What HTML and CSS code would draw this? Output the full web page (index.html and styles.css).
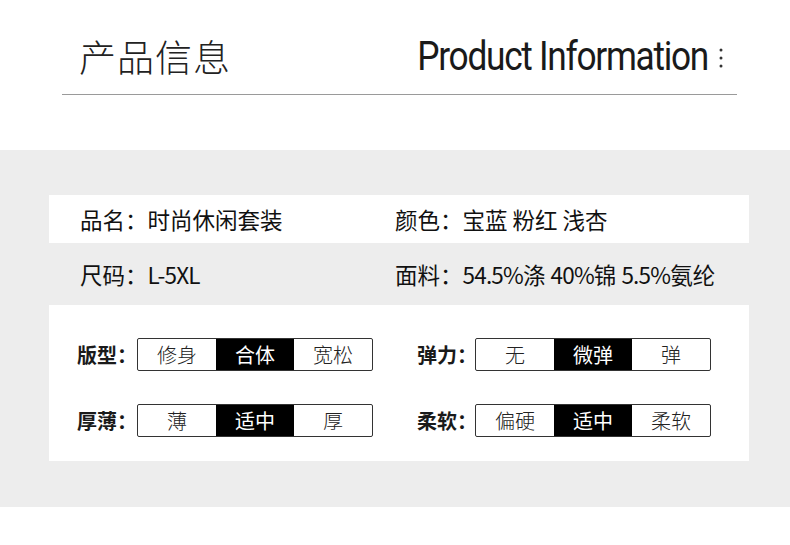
FILE: index.html
```html
<!DOCTYPE html>
<html lang="zh-CN">
<head>
<meta charset="utf-8">
<link rel="stylesheet" href="styles.css">
</head>
<body>
<div class="page">
  <header class="head">
    <div class="head-row">
      <h1 class="title-cn">产品信息</h1>
      <div class="title-en"><span class="en-text">Product Information</span>
        <svg class="dots" width="6" height="22" viewBox="0 0 6 22"><circle cx="3" cy="3" r="1.5"/><circle cx="3" cy="11" r="1.5"/><circle cx="3" cy="19" r="1.5"/></svg>
      </div>
    </div>
    <div class="rule"></div>
  </header>

  <section class="band">
    <div class="info-row white">
      <div class="cell">品名：时尚休闲套装</div>
      <div class="cell">颜色：宝蓝 粉红 浅杏</div>
    </div>
    <div class="info-row grey">
      <div class="cell">尺码：<span class="lat">L-5XL</span></div>
      <div class="cell">面料：<span class="lat">54.5%</span>涤 <span class="lat">40%</span>锦 <span class="lat">5.5%</span>氨纶</div>
    </div>
    <div class="spec-box">
      <div class="spec-row">
        <div class="spec">
          <span class="spec-label">版型：</span>
          <div class="seg"><span>修身</span><span class="on">合体</span><span>宽松</span></div>
        </div>
        <div class="spec right">
          <span class="spec-label">弹力：</span>
          <div class="seg"><span>无</span><span class="on">微弹</span><span>弹</span></div>
        </div>
      </div>
      <div class="spec-row">
        <div class="spec">
          <span class="spec-label">厚薄：</span>
          <div class="seg"><span>薄</span><span class="on">适中</span><span>厚</span></div>
        </div>
        <div class="spec right">
          <span class="spec-label">柔软：</span>
          <div class="seg"><span>偏硬</span><span class="on">适中</span><span>柔软</span></div>
        </div>
      </div>
    </div>
  </section>
  <div class="foot"></div>
</div>
</body>
</html>
```

FILE: styles.css
```css
* { box-sizing: border-box; }
html, body { margin: 0; padding: 0; background: #fff; }
body {
  font-family: "Noto Sans CJK SC", "Noto Sans", sans-serif;
  color: #1a1a1a;
}
.page { width: 790px; height: 545px; overflow: hidden; }

.head { height: 150px; padding-top: 28px; }
.head-row {
  display: flex;
  justify-content: space-between;
  align-items: center;
  padding: 0 66px 0 79px;
  height: 56px;
}
.title-cn {
  margin: 0;
  font-size: 37px;
  font-weight: 300;
  letter-spacing: 1px;
  color: #222;
  line-height: 56px;
}
.title-en {
  display: flex;
  align-items: center;
  gap: 10px;
}
.en-text {
  display: inline-block;
  font-family: Roboto, "Liberation Sans", sans-serif;
  font-size: 41px;
  font-weight: 400;
  letter-spacing: -1.5px;
  color: #1a1a1a;
  line-height: 56px;
  transform: scaleX(0.86);
  transform-origin: right center;
}
.dots { fill: #333; margin-top: 4px; }
.rule {
  margin: 10px 53px 0 62px;
  height: 1px;
  background: #9a9a9a;
}

.band {
  background: #ededed;
  height: 357px;
  padding: 45px 41px 0 49px;
}
.info-row {
  display: grid;
  grid-template-columns: 315px 1fr;
  align-items: center;
  padding-left: 31px;
  font-size: 22.5px;
  font-weight: 400;
  color: #111;
  white-space: nowrap;
}
.lat { letter-spacing: -0.8px; }
.info-row.white { background: #fff; height: 48px; }
.info-row.grey { height: 62px; }

.spec-box {
  background: #fff;
  height: 156px;
  padding: 33px 0 0 28px;
  display: flex;
  flex-direction: column;
  gap: 33px;
}
.spec-row { display: flex; }
.spec { display: flex; align-items: center; flex-shrink: 0; width: 340px; }
.spec.right { width: auto; }
.spec-label {
  font-size: 20px;
  font-weight: 700;
  width: 60px;
  flex-shrink: 0;
  white-space: nowrap;
  color: #1a1a1a;
}
.spec.right .spec-label { width: 58px; }
.seg {
  display: flex;
  flex-shrink: 0;
  border: 1px solid #333;
  border-radius: 2px;
  height: 33px;
  width: 236px;
}
.seg span {
  flex: 1;
  display: flex;
  align-items: center;
  justify-content: center;
  font-size: 20px;
  font-weight: 300;
  color: #222;
  white-space: nowrap;
}
.seg span.on { background: #000; color: #fff; font-weight: 400; }
.foot { height: 38px; background: #fff; }
```
